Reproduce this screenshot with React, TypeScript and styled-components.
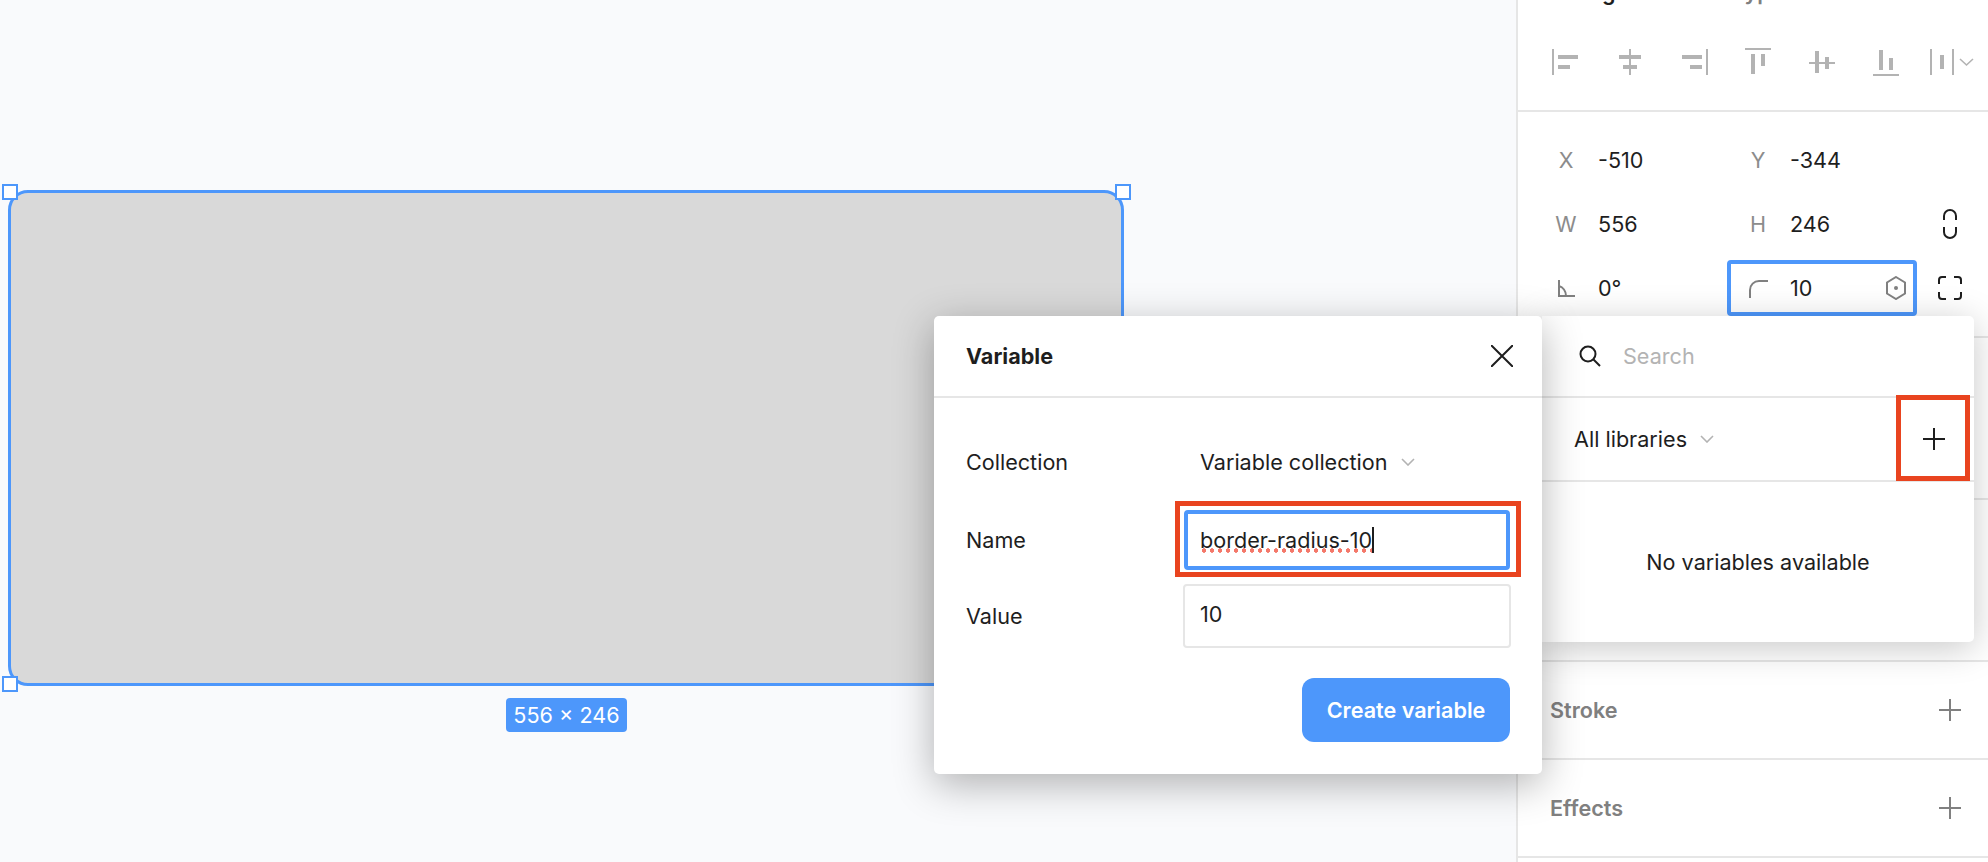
import * as React from 'react';
import styled, { createGlobalStyle } from 'styled-components';

const GlobalStyle = createGlobalStyle`
	html, body {
		margin: 0;
		padding: 0;
		background: #f9fafc;
	}
	* {
		box-sizing: border-box;
	}
`;

const Page = styled.div`
	position: relative;
	display: flex;
	width: 1988px;
	height: 862px;
	overflow: hidden;
	font-family: Inter, "Liberation Sans", sans-serif;
	font-size: 21.6px;
	color: #1e1e1e;
`;

const Canvas = styled.div`
	position: relative;
	flex: 1;
	background: #f9fafc;
`;

const Shape = styled.div`
	position: absolute;
	left: 8px;
	top: 190px;
	width: 1116px;
	height: 496px;
	background: #d9d9d9;
	border: 3px solid #4d97fb;
	border-radius: 20px;
`;

const Handle = styled.div<{ $x: number; $y: number }>`
	position: absolute;
	left: ${props => props.$x}px;
	top: ${props => props.$y}px;
	width: 16px;
	height: 16px;
	background: #fff;
	border: 2px solid #4d97fb;
`;

const SizeBadge = styled.div`
	position: absolute;
	left: 506px;
	top: 698px;
	width: 121px;
	height: 34px;
	display: flex;
	align-items: center;
	justify-content: center;
	background: #4d97fb;
	border-radius: 4px;
	color: #fff;
	white-space: nowrap;
`;

const Panel = styled.div`
	width: 472px;
	height: 862px;
	flex: none;
	background: #fff;
	border-left: 2px solid #e6e6e6;
`;

const Section = styled.div<{ $height: number }>`
	display: flow-root;
	height: ${props => props.$height}px;
	border-bottom: 2px solid #e6e6e6;
`;

const Tabs = styled.div`
	display: flex;
	gap: 52px;
	height: 24px;
	margin-top: -20px;
	padding-left: 38px;
	line-height: 24px;
	font-weight: 600;
`;

const Tab = styled.span<{ $active?: boolean }>`
	color: ${props => (props.$active ? '#1e1e1e' : '#808080')};
`;

const AlignRow = styled.div`
	display: flex;
	margin-top: 42px;
	padding-left: 15px;
	svg {
		display: block;
		flex: none;
	}
`;

const TransformRows = styled.div`
	padding: 16px 0 0 32px;
`;

const FieldRow = styled.div`
	display: grid;
	grid-template-columns: 192px 192px 32px;
	height: 64px;
	align-items: center;
`;

const Field = styled.div<{ $focused?: boolean }>`
	position: relative;
	display: flex;
	align-items: center;
	height: 100%;
	padding-right: 28px;
	${props => props.$focused && `
		&::after {
			content: '';
			position: absolute;
			left: -15px;
			right: 17px;
			top: 4px;
			bottom: 4px;
			border: 4px solid #4d97fb;
			border-radius: 4px;
		}
	`}
`;

const FieldLabel = styled.span`
	width: 32px;
	margin-right: 16px;
	display: flex;
	justify-content: center;
	color: #8c8c8c;
`;

const FieldValue = styled.span`
	flex: 1;
`;

const IconCell = styled.div`
	display: flex;
	justify-content: center;
	align-items: center;
`;

const SectionHead = styled.div`
	height: 96px;
	display: flex;
	align-items: center;
	justify-content: space-between;
	padding: 0 27px 0 32px;
	color: #808080;
	font-weight: 600;
`;

const Popover = styled.div`
	position: absolute;
	left: 1542px;
	top: 316px;
	width: 432px;
	height: 326px;
	background: #fff;
	border-radius: 0 5px 5px 0;
	box-shadow: 0 6px 36px rgba(0, 0, 0, 0.22);
`;

const SearchRow = styled.div`
	height: 82px;
	display: flex;
	align-items: center;
	gap: 22px;
	padding: 0 0 0 37px;
	border-bottom: 2px solid #e6e6e6;
	color: #b3b3b3;
`;

const LibraryRow = styled.div`
	height: 84px;
	display: flex;
	align-items: center;
	justify-content: space-between;
	padding: 0 29px 0 32px;
	border-bottom: 2px solid #e6e6e6;
`;

const Select = styled.div`
	display: flex;
	align-items: center;
	gap: 13px;
`;

const EmptyText = styled.div`
	height: 160px;
	display: flex;
	align-items: center;
	justify-content: center;
`;

const Annotation = styled.div`
	position: absolute;
	border: 5px solid #e9441f;
`;

const PlusMark = styled(Annotation)`
	right: 4px;
	top: 79px;
	width: 74px;
	height: 86px;
`;

const NameMark = styled(Annotation)`
	left: -13px;
	right: -15px;
	top: -13px;
	bottom: -11px;
`;

const Modal = styled.div`
	position: absolute;
	left: 934px;
	top: 316px;
	width: 608px;
	height: 458px;
	background: #fff;
	border-radius: 5px;
	box-shadow: 0 10px 40px rgba(0, 0, 0, 0.3);
`;

const ModalHeader = styled.div`
	height: 82px;
	display: flex;
	align-items: center;
	justify-content: space-between;
	padding: 0 29px 0 32px;
	border-bottom: 2px solid #e6e6e6;
	font-weight: 700;
`;

const ModalBody = styled.div`
	padding: 34px 32px 0 32px;
`;

const FormRow = styled.div<{ $height: number; $top: number }>`
	display: grid;
	grid-template-columns: 218px 1fr;
	align-items: center;
	height: ${props => props.$height}px;
	margin-top: ${props => props.$top}px;
`;

const CollectionSelect = styled(Select)`
	padding-left: 16px;
`;

const NameInput = styled.div`
	position: relative;
	height: 60px;
	display: flex;
	align-items: center;
	padding-left: 12px;
	border: 4px solid #4d97fb;
	border-radius: 4px;
`;

const SpellText = styled.span`
	position: relative;
	border-right: 2px solid #1e1e1e;
	line-height: 26px;
	&::after {
		content: '';
		position: absolute;
		left: 0;
		right: 0;
		bottom: 0;
		height: 5px;
		background: radial-gradient(circle, #f4786a 2px, transparent 2.4px) 0 0 / 8px 5px repeat-x;
	}
`;

const ValueInput = styled.div`
	height: 64px;
	display: flex;
	align-items: center;
	padding: 0 0 4px 15px;
	border: 2px solid #e6e6e6;
	border-radius: 4px;
	margin-right: -1px;
	margin-left: -1px;
`;

const ModalFooter = styled.div`
	display: flex;
	justify-content: flex-end;
	margin-top: 30px;
`;

const PrimaryButton = styled.button`
	width: 208px;
	height: 64px;
	padding: 0;
	border: 0;
	border-radius: 12px;
	background: #4d97fb;
	color: #fff;
	font: 600 21.6px Inter, "Liberation Sans", sans-serif;
`;

const Chevron = () => (
	<svg width="14" height="8" viewBox="0 0 14 8" fill="none" stroke="#b3b3b3" strokeWidth="1.6">
		<path d="M1 1l6 6 6-6" />
	</svg>
);

const Plus = ({ color }: { color: string }) => (
	<svg width="22" height="22" viewBox="0 0 22 22" stroke={color} strokeWidth="2">
		<path d="M0 11h22M11 0v22" />
	</svg>
);

// [x, y, width, height] bars in each 64x32 align icon
const alignIcons: number[][][] = [
	[[19, 3, 2, 26], [25, 9, 20, 4], [25, 19, 12, 4]],
	[[32, 3, 2, 26], [22, 9, 22, 4], [26, 19, 14, 4]],
	[[45, 3, 2, 26], [21, 9, 20, 4], [29, 19, 12, 4]],
	[[20, 2, 26, 2], [26, 8, 4, 20], [36, 8, 4, 12]],
	[[20, 16, 26, 2], [26, 5, 4, 22], [36, 11, 4, 12]],
	[[20, 28, 26, 2], [26, 4, 4, 20], [36, 12, 4, 12]],
	[[13, 3, 2, 26], [35, 3, 2, 26], [23, 9, 4, 14]],
];

const AlignIcon = ({ bars, more }: { bars: number[][]; more?: boolean }) => (
	<svg width="64" height="32" viewBox="0 0 64 32">
		{bars.map((b, i) => <rect key={i} x={b[0]} y={b[1]} width={b[2]} height={b[3]} fill="#b3b3b3" />)}
		{more && <path d="M43 13l6.5 6 6.5-6" fill="none" stroke="#b3b3b3" strokeWidth="1.6" />}
	</svg>
);

const App = () => (
	<Page>
		<GlobalStyle />
		<Canvas>
			<Shape />
			<Handle $x={2} $y={184} />
			<Handle $x={1115} $y={184} />
			<Handle $x={2} $y={676} />
			<SizeBadge>556 × 246</SizeBadge>
		</Canvas>

		<Panel>
			<Section $height={112}>
				<Tabs>
					<Tab $active>Design</Tab>
					<Tab>Prototype</Tab>
				</Tabs>
				<AlignRow>
					{alignIcons.map((bars, i) => <AlignIcon key={i} bars={bars} more={i === 6} />)}
				</AlignRow>
			</Section>

			<Section $height={226}>
				<TransformRows>
					<FieldRow>
						<Field><FieldLabel>X</FieldLabel><FieldValue>-510</FieldValue></Field>
						<Field><FieldLabel>Y</FieldLabel><FieldValue>-344</FieldValue></Field>
					</FieldRow>
					<FieldRow>
						<Field><FieldLabel>W</FieldLabel><FieldValue>556</FieldValue></Field>
						<Field><FieldLabel>H</FieldLabel><FieldValue>246</FieldValue></Field>
						<IconCell>
							<svg width="14" height="30" viewBox="0 0 14 30" fill="none" stroke="#1e1e1e" strokeWidth="2">
								<path d="M1 11V7a6 6 0 0 1 12 0v4M1 18v5a6 6 0 0 0 12 0v-5" />
							</svg>
						</IconCell>
					</FieldRow>
					<FieldRow>
						<Field>
							<FieldLabel>
								<svg width="17" height="17" viewBox="0 0 17 17" fill="none" stroke="#808080" strokeWidth="2">
									<path d="M1 0v16h16M1 6c4 1 7 5 7 10" />
								</svg>
							</FieldLabel>
							<FieldValue>0°</FieldValue>
						</Field>
						<Field $focused>
							<FieldLabel>
								<svg width="19" height="19" viewBox="0 0 19 19" fill="none" stroke="#808080" strokeWidth="2">
									<path d="M1 19v-8a9 9 0 0 1 9-9h9" />
								</svg>
							</FieldLabel>
							<FieldValue>10</FieldValue>
							<svg width="20" height="24" viewBox="0 0 20 24" fill="none" stroke="#808080" strokeWidth="2">
								<path d="M10 1l9 5.500v11L10 23l-9-5.500v-11z" />
								<circle cx="10" cy="12" r="2" fill="#808080" stroke="none" />
							</svg>
						</Field>
						<IconCell>
							<svg width="24" height="24" viewBox="0 0 24 24" fill="none" stroke="#1e1e1e" strokeWidth="2">
								<path d="M1 8V4a3 3 0 0 1 3-3h4M16 1h4a3 3 0 0 1 3 3v4M23 16v4a3 3 0 0 1-3 3h-4M8 23H4a3 3 0 0 1-3-3v-4" />
							</svg>
						</IconCell>
					</FieldRow>
				</TransformRows>
			</Section>

			<Section $height={162} />
			<Section $height={162} />

			<Section $height={98}>
				<SectionHead>Stroke<Plus color="#808080" /></SectionHead>
			</Section>
			<Section $height={98}>
				<SectionHead>Effects<Plus color="#808080" /></SectionHead>
			</Section>
		</Panel>

		<Popover>
			<SearchRow>
				<svg width="22" height="22" viewBox="0 0 22 22" fill="none" stroke="#1e1e1e" strokeWidth="2">
					<circle cx="9" cy="9" r="7.500" />
					<path d="M14.500 14.500L21 21" />
				</svg>
				Search
			</SearchRow>
			<LibraryRow>
				<Select>All libraries <Chevron /></Select>
				<Plus color="#1e1e1e" />
			</LibraryRow>
			<EmptyText>No variables available</EmptyText>
			<PlusMark />
		</Popover>

		<Modal>
			<ModalHeader>
				Variable
				<svg width="22" height="22" viewBox="0 0 22 22" stroke="#1e1e1e" strokeWidth="2">
					<path d="M0 0l22 22M22 0L0 22" />
				</svg>
			</ModalHeader>
			<ModalBody>
				<FormRow $height={60} $top={0}>
					<span>Collection</span>
					<CollectionSelect>Variable collection <Chevron /></CollectionSelect>
				</FormRow>
				<FormRow $height={60} $top={18}>
					<span>Name</span>
					<NameInput>
						<SpellText>border-radius-10</SpellText>
						<NameMark />
					</NameInput>
				</FormRow>
				<FormRow $height={64} $top={14}>
					<span>Value</span>
					<ValueInput>10</ValueInput>
				</FormRow>
				<ModalFooter>
					<PrimaryButton>Create variable</PrimaryButton>
				</ModalFooter>
			</ModalBody>
		</Modal>
	</Page>
);

export default App;
